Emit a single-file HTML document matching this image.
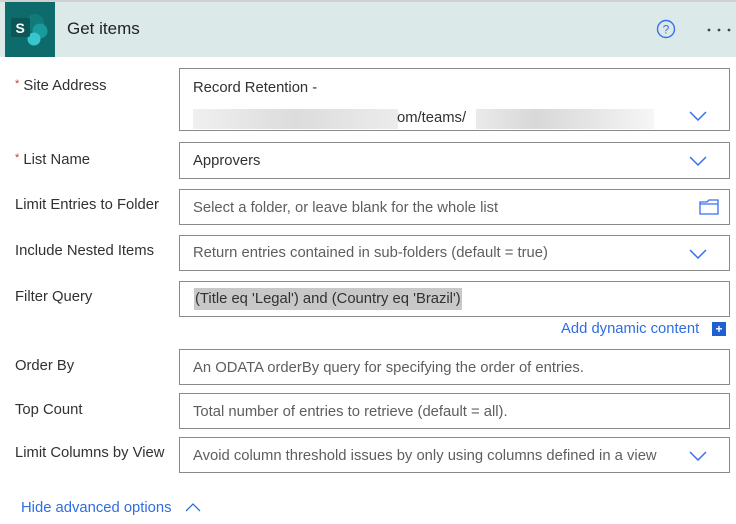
<!DOCTYPE html><html><head><style>
body{margin:0;width:736px;height:524px;background:#fff;font-family:"Liberation Sans",sans-serif;position:relative;overflow:hidden;color:#323130}
.a{position:absolute}
.hdr{left:0;top:0;width:736px;height:55px;background:#dbe9e9;border-top:2px solid #d0d0d0}
.lbl{left:15px;font-size:14.8px;color:#323130}
.box{left:179px;width:549px;border:1px solid #8a8a8a;background:#fff;font-size:14.8px}
.box span{position:absolute;left:13px}
.ph{color:#605e5c}
.chev{position:absolute;right:22px;width:18px;height:10px}
.star{color:#d13438;font-size:11px;vertical-align:top}
</style></head><body>
<div class="a hdr"></div>
<div class="a" style="left:5px;top:2px;width:50px;height:55px;background:#0e6b6b"></div>
<svg class="a" style="left:9px;top:13px" width="44" height="34" viewBox="0 0 44 34">
<circle cx="26" cy="10" r="9" fill="#127a7a"/><circle cx="31" cy="18" r="7.5" fill="#1a9a9a"/><circle cx="25" cy="26" r="6.5" fill="#37c6d0"/>
<rect x="2" y="5" width="19" height="19" rx="2" fill="#0b5656"/><text x="6.5" y="20" font-size="14" font-weight="bold" fill="#fff" font-family="Liberation Sans">S</text></svg>
<div class="a" style="left:67px;top:19px;font-size:17px;color:#222">Get items</div>
<svg class="a" style="left:656px;top:19px" width="20" height="20" viewBox="0 0 20 20"><circle cx="10" cy="10" r="8.5" fill="none" stroke="#3a6ff0" stroke-width="1.4"/><text x="10" y="14.5" text-anchor="middle" font-size="12" fill="#3a6ff0" font-family="Liberation Sans">?</text></svg>
<svg class="a" style="left:706px;top:27px" width="30" height="6"><circle cx="3" cy="3" r="1.4" fill="#444"/><circle cx="13" cy="3" r="1.4" fill="#444"/><circle cx="23" cy="3" r="1.4" fill="#444"/></svg>

<div class="a lbl" style="top:78px"><span class="star">*</span> Site Address</div>
<div class="a box" style="top:68px;height:61px"><span style="top:11px">Record Retention -</span>
<div style="position:absolute;left:13px;top:40px;width:205px;height:20px;background:linear-gradient(90deg,#f0f0f0,#dcdcdc,#ececec)"></div>
<span style="left:217px;top:41px">om/teams/</span>
<div style="position:absolute;left:296px;top:40px;width:178px;height:20px;background:linear-gradient(90deg,#eaeaea,#d8d8d8,#e6e6e6,#f6f6f6)"></div>
<svg class="chev" style="top:42px" viewBox="0 0 18 10"><path d="M1 1 L9 9 L17 1" fill="none" stroke="#3a6ff0" stroke-width="1.5"/></svg></div>

<div class="a lbl" style="top:152px"><span class="star">*</span> List Name</div>
<div class="a box" style="top:142px;height:35px"><span style="top:10px">Approvers</span><svg class="chev" style="top:13px" viewBox="0 0 18 10"><path d="M1 1 L9 9 L17 1" fill="none" stroke="#3a6ff0" stroke-width="1.5"/></svg></div>

<div class="a lbl" style="top:197px">Limit Entries to Folder</div>
<div class="a box" style="top:189px;height:34px"><span class="ph" style="top:10px">Select a folder, or leave blank for the whole list</span>
<svg style="position:absolute;right:10px;top:9px" width="20" height="16" viewBox="0 0 20 16"><path d="M1 3 H8 L10 1 H19 V15 H1 Z M1 5 H19" fill="none" stroke="#3a6ff0" stroke-width="1.3"/></svg></div>

<div class="a lbl" style="top:243px">Include Nested Items</div>
<div class="a box" style="top:235px;height:34px"><span class="ph" style="top:9px">Return entries contained in sub-folders (default = true)</span><svg class="chev" style="top:13px" viewBox="0 0 18 10"><path d="M1 1 L9 9 L17 1" fill="none" stroke="#3a6ff0" stroke-width="1.5"/></svg></div>

<div class="a lbl" style="top:289px">Filter Query</div>
<div class="a box" style="top:281px;height:34px"><span style="top:6px;left:14px;background:#c8c8c8;padding:3px 1px">(Title eq 'Legal') and (Country eq 'Brazil')</span></div>
<div class="a" style="left:561px;top:321px;font-size:14.8px;color:#2f6de0">Add dynamic content</div>
<div class="a" style="left:712px;top:322px;width:14px;height:14px;background:#1f5fd0;color:#fff;font-size:12px;line-height:14px;text-align:center;font-weight:bold">+</div>

<div class="a lbl" style="top:358px">Order By</div>
<div class="a box" style="top:349px;height:34px"><span class="ph" style="top:10px">An ODATA orderBy query for specifying the order of entries.</span></div>

<div class="a lbl" style="top:402px">Top Count</div>
<div class="a box" style="top:393px;height:34px"><span class="ph" style="top:10px">Total number of entries to retrieve (default = all).</span></div>

<div class="a lbl" style="top:445px">Limit Columns by View</div>
<div class="a box" style="top:437px;height:34px"><span class="ph" style="top:10px">Avoid column threshold issues by only using columns defined in a view</span><svg class="chev" style="top:13px" viewBox="0 0 18 10"><path d="M1 1 L9 9 L17 1" fill="none" stroke="#3a6ff0" stroke-width="1.5"/></svg></div>

<div class="a" style="left:21px;top:500px;font-size:14.8px;color:#2f6de0">Hide advanced options</div>
<svg class="a" style="left:185px;top:503px" width="16" height="9" viewBox="0 0 16 9"><path d="M1 8 L8 1 L15 8" fill="none" stroke="#2f6de0" stroke-width="1.3"/></svg>
</body></html>
